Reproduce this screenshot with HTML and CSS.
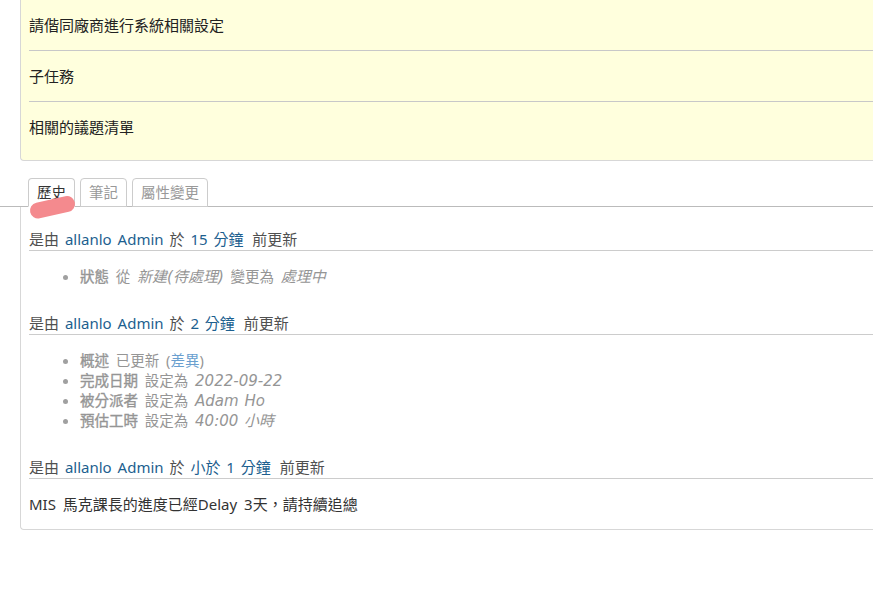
FILE: index.html
```html
<!DOCTYPE html>
<html lang="zh-Hant">
<head>
<meta charset="utf-8">
<title>議題</title>
<link rel="stylesheet" href="styles.css">
</head>
<body>
<div class="issue">
  <div class="row sep">請偕同廠商進行系統相關設定</div>
  <div class="row sep">子任務</div>
  <div class="row">相關的議題清單</div>
</div>

<div class="tabs">
  <span class="tab selected">歷史</span>
  <span class="tab">筆記</span>
  <span class="tab">屬性變更</span>
  <svg class="mark" width="60" height="30" viewBox="0 0 60 30"><path d="M10 16.5 L39 10" stroke="#f48a8e" stroke-width="16" stroke-linecap="round" fill="none"/></svg>
</div>

<div class="history">
  <div class="journal">
    <h4>是由 <a href="#">allanlo Admin</a> 於 <a href="#">15 分鐘</a> <span class="ago">前更新</span></h4>
    <ul class="details">
      <li><strong>狀態</strong> 從 <i>新建(待處理)</i> 變更為 <i>處理中</i></li>
    </ul>
  </div>
  <div class="journal">
    <h4>是由 <a href="#">allanlo Admin</a> 於 <a href="#">2 分鐘</a> <span class="ago">前更新</span></h4>
    <ul class="details">
      <li><strong>概述</strong> 已更新 (<a href="#">差異</a>)</li>
      <li><strong>完成日期</strong> 設定為 <i>2022-09-22</i></li>
      <li><strong>被分派者</strong> 設定為 <i>Adam Ho</i></li>
      <li><strong>預估工時</strong> 設定為 <i>40:00 小時</i></li>
    </ul>
  </div>
  <div class="journal">
    <h4>是由 <a href="#">allanlo Admin</a> 於 <a href="#">小於 1 分鐘</a> <span class="ago">前更新</span></h4>
    <p class="note">MIS 馬克課長的進度已經Delay 3天，請持續追總</p>
  </div>
</div>
</body>
</html>
```
FILE: styles.css
```css
html, body {
  margin: 0;
  padding: 0;
  background: #fff;
  overflow: hidden;
}
body {
  font-family: "Noto Sans", "Noto Sans CJK TC", sans-serif;
  color: #333;
  width: 873px;
  height: 596px;
}
.issue {
  margin-left: 20px;
  margin-right: -20px;
  background: #ffffdd;
  border-left: 1px solid #d7d7d7;
  border-bottom: 1px solid #d7d7d7;
  border-bottom-left-radius: 4px;
  padding: 0 0 8px 8px;
}
.row {
  height: 50px;
  line-height: 50px;
  font-size: 15px;
  color: #222;
}
.row.sep {
  border-bottom: 1px solid #c8c8c8;
}
.tabs {
  position: relative;
  margin-top: 17px;
  padding-left: 28px;
  height: 28px;
  border-bottom: 1px solid #bbb;
  display: flex;
  gap: 5px;
  align-items: flex-start;
}
.tab {
  box-sizing: border-box;
  height: 29px;
  line-height: 27px;
  padding: 0 8px;
  font-size: 14.5px;
  color: #999;
  background: #fff;
  border: 1px solid #ccc;
  border-radius: 4px 4px 0 0;
}
.tab.selected {
  color: #333;
  border-bottom-color: #fff;
}
.mark {
  position: absolute;
  left: 28px;
  top: 16px;
}
.history {
  margin-left: 20px;
  margin-right: -20px;
  border-left: 1px solid #d7d7d7;
  border-bottom: 1px solid #d7d7d7;
  border-bottom-left-radius: 4px;
  padding: 21px 0 15px 8px;
}
.journal h4 {
  margin: 0;
  font-weight: normal;
  font-size: 15px;
  line-height: 22px;
  word-spacing: 2px;
  color: #505050;
  border-bottom: 1px solid #ccc;
}
.journal h4 a {
  color: #1d5f8f;
  text-decoration: none;
}
.journal h4 .ago {
  margin-left: 3px;
}
.details {
  margin: 15px 0 26px;
  padding-left: 51px;
  list-style: disc;
  color: #959595;
  font-size: 14.5px;
  line-height: 20px;
  word-spacing: 3px;
}
.details li {
  height: 20px;
}
.details li::marker {
  color: #a0a0a0;
}
.details strong {
  font-weight: normal;
  -webkit-text-stroke: 0.35px currentColor;
}
.details i {
  font-family: "DejaVu Sans", "Noto Sans CJK TC", sans-serif;
  font-size: 15px;
  line-height: 1;
  word-spacing: 1px;
}
.details a {
  color: #6a9fcf;
  text-decoration: none;
}
.note {
  margin: 15px 0 0;
  font-size: 15px;
  line-height: 20px;
  word-spacing: 3px;
  color: #333;
}
```
